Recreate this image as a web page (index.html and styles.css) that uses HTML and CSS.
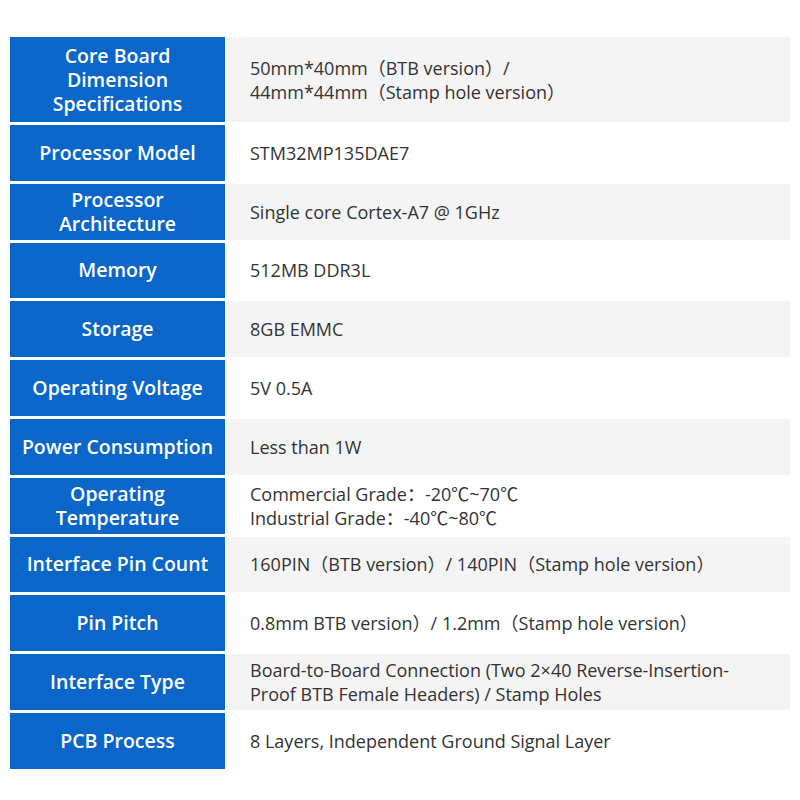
FILE: index.html
```html
<!DOCTYPE html>
<html>
<head>
<meta charset="utf-8">
<link rel="stylesheet" href="styles.css">
</head>
<body>
<div class="spec">
  <div class="k">Core Board<br>Dimension<br>Specifications</div>
  <div class="v odd">50mm*40mm（BTB version）/<br>44mm*44mm（Stamp hole version）</div>

  <div class="k">Processor Model</div>
  <div class="v">STM32MP135DAE7</div>

  <div class="k">Processor<br>Architecture</div>
  <div class="v odd">Single core Cortex-A7 @ 1GHz</div>

  <div class="k">Memory</div>
  <div class="v">512MB DDR3L</div>

  <div class="k">Storage</div>
  <div class="v odd">8GB EMMC</div>

  <div class="k">Operating Voltage</div>
  <div class="v">5V 0.5A</div>

  <div class="k">Power Consumption</div>
  <div class="v odd">Less than 1W</div>

  <div class="k">Operating<br>Temperature</div>
  <div class="v">Commercial Grade：-20℃~70℃<br>Industrial Grade：-40℃~80℃</div>

  <div class="k">Interface Pin Count</div>
  <div class="v odd">160PIN（BTB version）/ 140PIN（Stamp hole version）</div>

  <div class="k">Pin Pitch</div>
  <div class="v">0.8mm BTB version）/ 1.2mm（Stamp hole version）</div>

  <div class="k">Interface Type</div>
  <div class="v odd">Board-to-Board Connection (Two 2×40 Reverse-Insertion-<br>Proof BTB Female Headers) / Stamp Holes</div>

  <div class="k">PCB Process</div>
  <div class="v">8 Layers, Independent Ground Signal Layer</div>
</div>
</body>
</html>
```

FILE: styles.css
```css
html, body {
  margin: 0;
  padding: 0;
  background: #ffffff;
}

.spec {
  margin: 37px 0 0 10px;
  display: grid;
  grid-template-columns: 215px 564px;
  grid-template-rows: 85px repeat(11, 55.8px);
  column-gap: 1px;
  row-gap: 3px;
}

.k {
  background: #0a66c8;
  color: #ffffff;
  font-family: "Open Sans", "Noto Sans", sans-serif;
  font-size: 19.5px;
  font-weight: 600;
  line-height: 24px;
  text-align: center;
  display: flex;
  align-items: center;
  justify-content: center;
}

.v {
  background: #ffffff;
  color: #333333;
  font-family: "Open Sans", "Noto Sans CJK SC", sans-serif;
  font-size: 18px;
  line-height: 24px;
  padding-left: 24px;
  display: flex;
  align-items: center;
}

.v.odd {
  background: #f4f4f4;
}
```
